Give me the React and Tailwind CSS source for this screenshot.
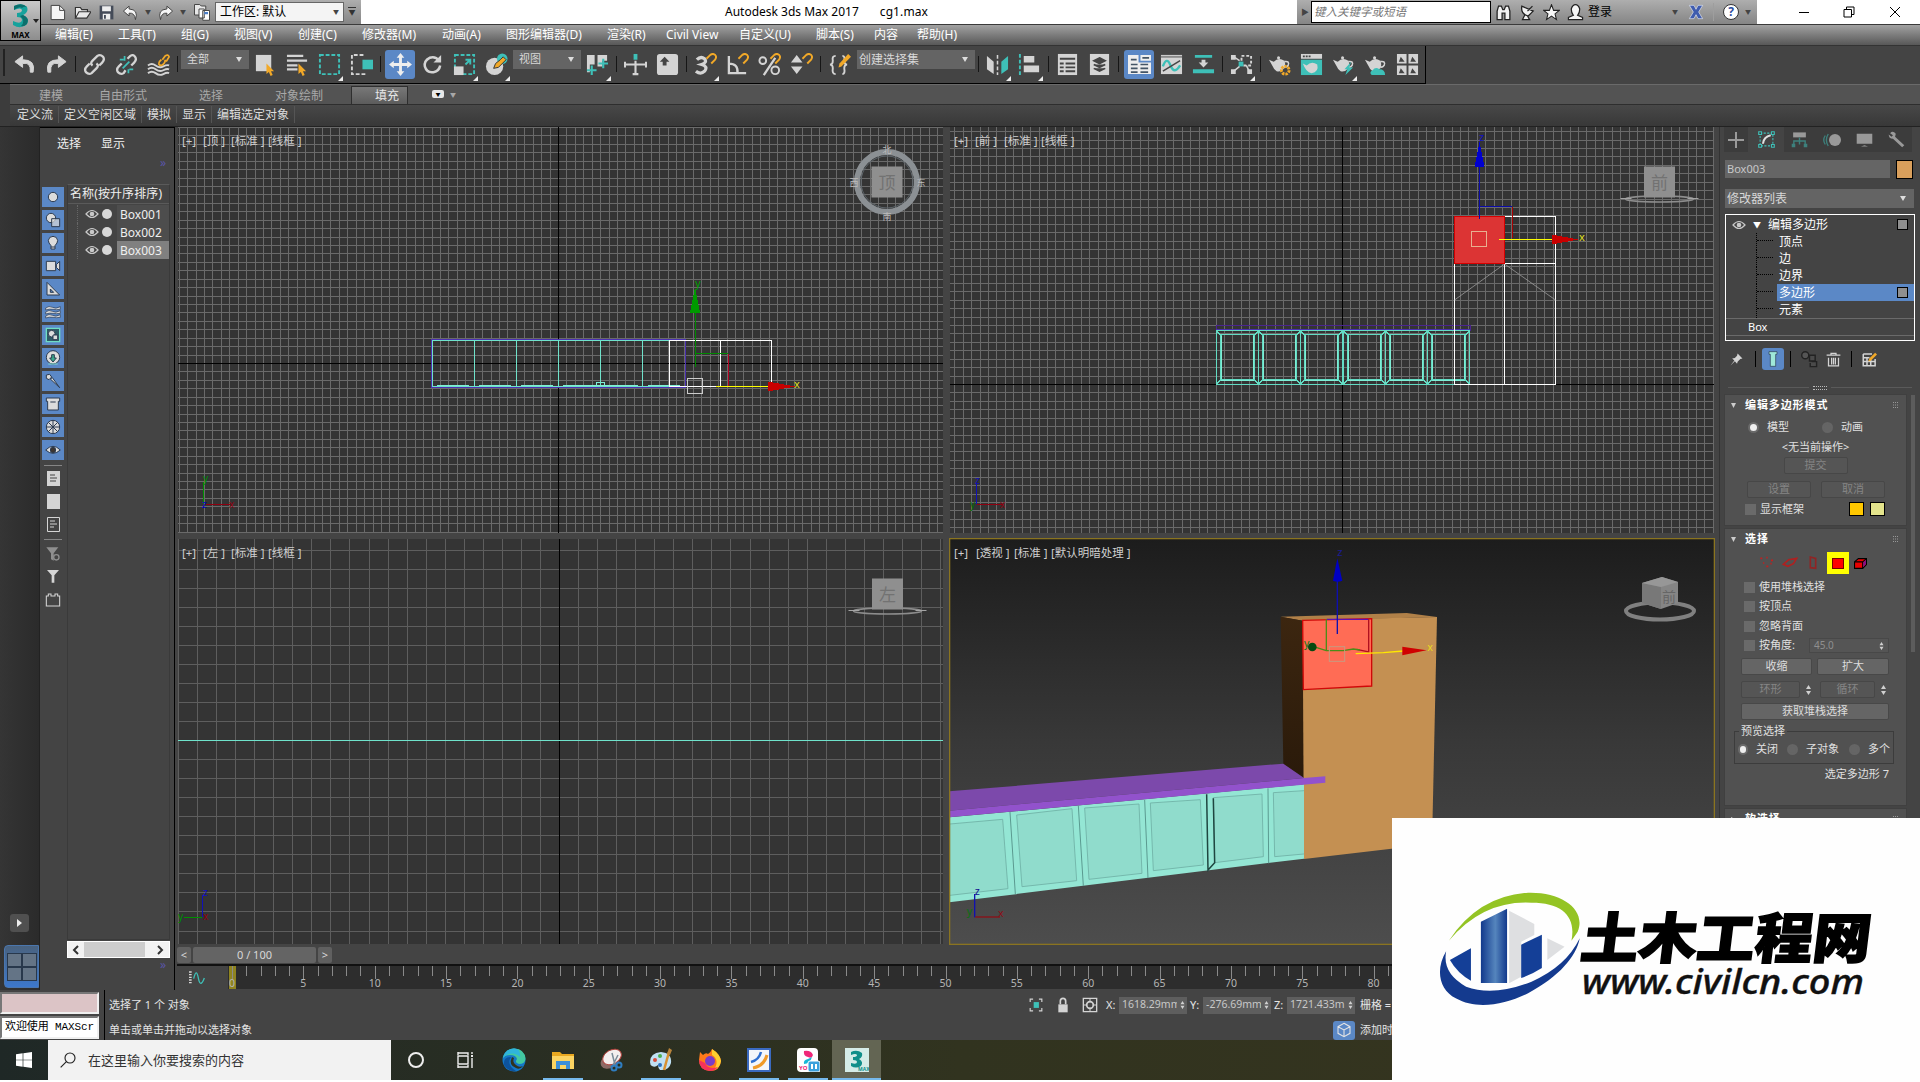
import { Fragment } from "react";

const MENUS = [
  ["编辑(E)", "w-[63px]"],
  ["工具(T)", "w-[63px]"],
  ["组(G)", "w-[53px]"],
  ["视图(V)", "w-16"],
  ["创建(C)", "w-16"],
  ["修改器(M)", "w-20"],
  ["动画(A)", "w-16"],
  ["图形编辑器(D)", "w-[101px]"],
  ["渲染(R)", "w-[59px]"],
  ["Civil View", "w-[73px]"],
  ["自定义(U)", "w-[77px]"],
  ["脚本(S)", "w-[58px]"],
  ["内容", "w-[43px]"],
  ["帮助(H)", "w-16"],
];

const L = "#d4d4d4";
const T = "#3ec0b8";
const O = "#f2a928";

function Svg({ children, className = "w-6 h-6", box = "0 0 24 24" }) {
  return (
    <svg className={`shrink-0 ${className}`} viewBox={box} fill="none">
      {children}
    </svg>
  );
}

function Tool({ children, active, more }) {
  return (
    <div className="relative flex h-[30px] w-8 shrink-0 items-center justify-center">
      <div
        className={
          active
            ? "flex h-[29px] w-[30px] items-center justify-center rounded-[3px] bg-[#5b88c6]"
            : "flex items-center justify-center"
        }
      >
        <Svg className="h-[23px] w-[23px]">{children}</Svg>
      </div>
      {more && (
        <svg className="absolute right-0.5 -bottom-0.5 h-1.5 w-1.5" viewBox="0 0 6 6">
          <path d="M6 1V6H1Z" fill="#eee" />
        </svg>
      )}
    </div>
  );
}

function Sep() {
  return (
    <div className="flex h-[30px] w-1.5 shrink-0 items-center justify-center">
      <div className="h-4 w-px bg-[#161616]" />
    </div>
  );
}

function Dropdown({ label, className }) {
  return (
    <div className={`flex h-[19px] shrink-0 items-center justify-between self-start bg-[#646464] text-[#d8d8d8] ${className}`}>
      <span>{label}</span>
      <svg className="h-[5px] w-1.5" viewBox="0 0 6 5">
        <path d="M0 0H6L3 5Z" fill="#ddd" />
      </svg>
    </div>
  );
}

function Cursor() {
  return <path d="M13 11V22L15.500 19.800L17.300 24L19.500 23L17.700 19H21Z" fill={O} />;
}

function Magnet() {
  return <path d="M13 6L17 2Q20 0 22 2Q24 4 22 7L18 11" stroke={O} strokeWidth="2" />;
}

function Teapot() {
  return (
    <>
      <path d="M1 7L6 9Q11 4 17 8Q19 12 17 16Q14 20 9 19Q6 17 5 14Z" fill={L} />
      <path d="M17 9Q23 8 21 13Q20 15 17 15" stroke={L} strokeWidth="1.6" />
      <circle cx="11" cy="5" r="1.6" fill={L} />
    </>
  );
}

function TitleBar() {
  return (
    <div className="flex h-6 shrink-0 bg-white text-xs text-black">
      <div className="flex w-[361px] items-center bg-linear-to-b from-[#aeaeae] to-[#858585] pl-[49px]">
        <Svg className="mr-2 h-[17px] w-[17px]">
          <path d="M3 2H15L22 9V22H3Z" fill="#f5f5f5" stroke="#444" strokeWidth="1.4" />
          <path d="M15 2V9H22" stroke="#444" strokeWidth="1.4" />
        </Svg>
        <Svg className="mr-2 h-[17px] w-[17px]">
          <path d="M2 20V5H9L11 8H19V11M2 20L7 11H24L18 20Z" fill="#e8e8e8" stroke="#333" strokeWidth="1.6" />
        </Svg>
        <Svg className="mr-2 h-[15px] w-[15px]">
          <path d="M1 1H23V23H1Z" fill="#444b58" />
          <path d="M5 2H19V10H5ZM6 14H18V23H6Z" fill="#eee" />
          <path d="M8 16H11V22H8Z" fill="#444b58" />
        </Svg>
        <Svg className="h-[17px] w-[17px]">
          <path d="M10 3L2 10L10 17V13Q18 12 19 22Q24 8 10 7Z" fill="#f5f5f5" stroke="#444" strokeWidth="1.4" />
        </Svg>
        <span className="mx-1.5 text-[6px] text-[#444]">▼</span>
        <Svg className="h-[17px] w-[17px]">
          <path d="M14 3L22 10L14 17V13Q6 12 5 22Q0 8 14 7Z" fill="#f5f5f5" stroke="#444" strokeWidth="1.4" />
        </Svg>
        <span className="mx-1.5 text-[6px] text-[#444]">▼</span>
        <Svg className="mr-1 ml-px h-[18px] w-[18px]">
          <path d="M2 2H9L11 4H17V16H2Z" fill="#e8e8e8" stroke="#444" strokeWidth="1.3" />
          <path d="M8 8H15V20H8ZM13 10H22V23H13Z" fill="#fff" stroke="#444" strokeWidth="1.3" />
          <path d="M15 12H20V15H15Z" fill="#4c7fc8" />
        </Svg>
        <div className="flex h-5 w-[129px] items-center justify-between border border-[#666] bg-[#f4f4f4] px-1">
          <span>工作区: 默认</span>
          <span className="text-[6px] text-[#444]">▼</span>
        </div>
        <div className="ml-1 flex flex-col items-center">
          <div className="h-px w-2 bg-[#333]" />
          <span className="text-[7px] leading-[9px] text-[#333]">▼</span>
        </div>
      </div>
      <div className="flex w-[936px] items-center pl-[364px] whitespace-pre">
        <span>Autodesk 3ds Max 2017</span>
        <span className="ml-[21px] tracking-[0.1px]">cg1.max</span>
      </div>
      <div className="flex w-[460px] items-center bg-linear-to-b from-[#aeaeae] to-[#858585]">
        <span className="w-3.5 pl-1 text-[8px] text-[#444]">▶</span>
        <div className="h-[22px] w-[180px] shrink-0 border border-black bg-white pl-0.5 text-[11.5px] leading-[19px] text-[#777] italic">
          键入关键字或短语
        </div>
        <Svg className="ml-1 h-[17px] w-[17px]">
          <path d="M3 22V10L5 3H9L11 8H13L15 3H19L21 10V22H14V13H10V22Z" fill="#f2f2f2" stroke="#222" strokeWidth="1.8" />
        </Svg>
        <Svg className="ml-[7px] h-[17px] w-[17px]">
          <path d="M4 3Q2 14 13 17L20 10ZM12 10L19 3M8 16L5 22H15L12 17" fill="#f2f2f2" stroke="#222" strokeWidth="1.8" />
        </Svg>
        <Svg className="ml-[7px] h-[17px] w-[17px]">
          <path d="M12 1L15 9H23L17 14L19 22L12 17L5 22L7 14L1 9H9Z" fill="#f7f7f7" stroke="#222" strokeWidth="1.5" />
        </Svg>
        <Svg className="ml-[7px] h-[17px] w-[17px]">
          <path d="M2 22V19L9 16Q6 12 6 7Q8 1 12 1Q16 1 18 7Q18 12 15 16L22 19V22Z" fill="#f7f7f7" stroke="#222" strokeWidth="1.7" />
        </Svg>
        <span className="ml-1">登录</span>
        <span className="ml-[60px] text-[6px] text-[#444]">▼</span>
        <Svg className="ml-2.5 h-4 w-4">
          <path d="M2 2H9L12 8L15 2H22L16 12L22 22H15L12 16L9 22H2L8 12Z" fill="#3f5cae" stroke="#e4e8f4" strokeWidth="1" />
        </Svg>
        <div className="mx-[9px] h-[18px] w-px bg-[#9e9e9e]" />
        <div className="flex h-4 w-4 items-center justify-center rounded-full border border-[#333] bg-white text-xs font-bold text-[#2b4da0]">?</div>
        <span className="ml-1.5 text-[6px] text-[#444]">▼</span>
      </div>
      <div className="flex flex-1 items-center pl-[42px]">
        <div className="h-px w-2.5 bg-black" />
        <Svg className="ml-[34px] h-3 w-3" box="0 0 12 12">
          <path d="M1 3.500H8.500V11H1ZM3.500 3.500V1H11V8.500H8.500" stroke="#000" />
        </Svg>
        <Svg className="ml-[34px] h-3 w-3" box="0 0 12 12">
          <path d="M1 1L11 11M11 1L1 11" stroke="#000" />
        </Svg>
      </div>
    </div>
  );
}

function AppButton() {
  return (
    <div className="absolute top-0 left-0 flex h-[41px] w-[41px] flex-col items-center justify-between border border-black bg-linear-to-b from-[#c9c9c9] to-[#8d8d8d]">
      <Svg className="mt-px h-[27px] w-9" box="0 0 36 27">
        <path d="M11 4Q19 0 24 5Q26 10 20 13Q27 16 24 22Q18 28 10 23V19Q18 23 19 18Q19 15 14 15V11Q19 11 19 8Q18 5 11 8Z" fill="#16a29c" />
        <path d="M11 4Q19 0 24 5Q21 4 19 6Q16 4 11 8ZM20 13Q27 16 24 22Q21 25 18 24Q23 19 17 14Z" fill="#0b6f6c" />
        <path d="M30 17H36L33 21Z" fill="#222" />
      </Svg>
      <span className="text-[8px] leading-[10px] font-bold text-black">MAX</span>
    </div>
  );
}

function MenuBar() {
  return (
    <div className="flex h-[21px] shrink-0 items-center border-t border-[#3a3a3a] bg-linear-to-b from-[#a2a2a2] to-[#585858] pl-[55px] text-xs text-white">
      {MENUS.map(([label, width]) => (
        <span key={label} className={`shrink-0 whitespace-nowrap ${width}`}>
          {label}
        </span>
      ))}
    </div>
  );
}

function Toolbar() {
  return (
    <div className="h-[39px] shrink-0 border-t border-[#333] bg-[#444]">
      <div className="flex h-[38px] w-[1426px] items-start border-r border-b border-black pt-[3px]">
        <div className="mr-[3px] ml-[3px] h-[27px] w-0.5 border-x border-[#222]" />
        <Tool>
          <path d="M10 3L2 9L10 15V11Q19 9 18 20L21 20Q24 7 10 7Z" fill={L} stroke={L} strokeWidth="1" />
        </Tool>
        <Tool>
          <path d="M14 3L22 9L14 15V11Q5 9 6 20L3 20Q0 7 14 7Z" fill={L} stroke={L} strokeWidth="1" />
        </Tool>
        <Sep />
        <Tool>
          <path d="M10 13Q7 11 10 8L15 3Q18 1 21 4Q23 7 20 10L17 13M14 11Q17 13 14 16L9 21Q6 23 3 20Q1 17 4 14L7 11" stroke={L} strokeWidth="2.4" />
        </Tool>
        <Tool>
          <path d="M13 6L16 3Q19 1 21 4Q23 7 20 10L17 13M11 18L9 21Q6 23 3 20Q1 17 4 14L7 11" stroke={L} strokeWidth="2.4" />
          <path d="M10 3V8M5 7H9M14 21V17M19 17H15M8 16L15 9" stroke={T} strokeWidth="1.8" />
        </Tool>
        <Tool>
          <path d="M1 13Q5 10 9 13T17 14T23 13M1 17Q5 14 9 17T17 18T23 17M1 21Q5 18 9 21T17 22T23 21" stroke={L} strokeWidth="2" />
          <path d="M16 7L19 3Q22 1 23 4L20 9M19 7Q19 11 15 13Q11 13 13 9L15 7" stroke={O} strokeWidth="1.8" />
        </Tool>
        <div className="w-[7px] shrink-0">
          <Sep />
        </div>
        <Dropdown label="全部" className="mt-px w-[68px] pr-[7px] pl-1.5 text-[11px]" />
        <Tool>
          <path d="M2 2H18V19H2Z" fill={L} />
          <Cursor />
        </Tool>
        <Tool>
          <path d="M1 3H18M1 8H22M1 13H12M1 17H12" stroke={L} strokeWidth="2.4" />
          <Cursor />
        </Tool>
        <Tool more>
          <path d="M2 2H22V22H2Z" stroke={T} strokeWidth="2" strokeDasharray="4 2" />
        </Tool>
        <Tool>
          <path d="M16 22H2V2H16" stroke={L} strokeWidth="2" strokeDasharray="4 2" />
          <path d="M13 7H24V17H13Z" fill={T} />
        </Tool>
        <div className="w-[7px] shrink-0">
          <Sep />
        </div>
        <Tool active>
          <path d="M12 0L16 5H13.500V10.500H19V8L24 12L19 16V13.500H13.500V19H16L12 24L8 19H10.500V13.500H5V16L0 12L5 8V10.500H10.500V5H8Z" fill="#eee" />
        </Tool>
        <Tool>
          <path d="M19 8Q15 3 9 5Q3 8 4 14Q6 21 13 20Q19 19 20 13" stroke={L} strokeWidth="2.6" />
          <path d="M21 2V10H13Z" fill={L} />
        </Tool>
        <Tool more>
          <path d="M2 2H22V22H2Z" stroke={T} strokeWidth="2" strokeDasharray="4 2" />
          <path d="M1 14H11V23H1Z" fill={L} />
          <path d="M13 7H18V12M18 7L13 12" stroke={T} strokeWidth="2" />
        </Tool>
        <Tool more>
          <circle cx="10" cy="14" r="9" fill={L} />
          <circle cx="18" cy="6" r="5.500" fill={T} />
          <path d="M19 4L22 7L14 15L9 16L11 11L16 7Z" fill={O} stroke="#333" />
        </Tool>
        <Dropdown label="视图" className="mt-px ml-px w-[68px] pr-[7px] pl-1.5 text-[11px]" />
        <Tool more>
          <path d="M1 2H9V12H4V20H1ZM12 2H22V8H17V14H12Z" fill={L} />
          <path d="M6 13V23M1 18H11M18 6V16M13 11H23" stroke={T} strokeWidth="2.2" />
        </Tool>
        <Sep />
        <Tool>
          <path d="M12 8V23M1 12H23M1 9V15M23 9V15M9 22H15" stroke={L} strokeWidth="2.2" />
          <path d="M10 1H14V7H10Z" fill={T} />
        </Tool>
        <Tool>
          <rect x="1" y="1" width="22" height="22" rx="3" fill={L} />
          <path d="M9 4L14 9H11V13H7V9H4Z" fill="#444" />
        </Tool>
        <Sep />
        <Tool more>
          <path d="M3 7Q7 3 11 6Q14 10 8 12Q15 14 11 19Q7 23 2 19" stroke={L} strokeWidth="3.400" />
          <Magnet />
        </Tool>
        <Tool>
          <path d="M3 3V21H21M3 11Q13 11 12 21" stroke={L} strokeWidth="2.400" />
          <Magnet />
        </Tool>
        <Tool>
          <circle cx="5" cy="8" r="3.500" stroke={L} strokeWidth="2" />
          <circle cx="18" cy="18" r="4" stroke={L} strokeWidth="2" />
          <path d="M18 5L6 23" stroke={L} strokeWidth="2.400" />
          <Magnet />
        </Tool>
        <Tool>
          <path d="M7 2L13 10H1ZM7 22L13 14H1Z" fill={L} />
          <Magnet />
        </Tool>
        <Sep />
        <Tool>
          <path d="M8 3Q4 3 5 8Q5 12 2 12Q5 12 5 16Q4 22 8 22M15 3Q18 3 17 8Q17 12 20 12Q17 12 17 16Q18 22 15 22" stroke={L} strokeWidth="2" />
          <path d="M21 1L24 4L14 14L11 15L12 11Z" fill={O} />
        </Tool>
        <Dropdown label="创建选择集" className="mt-px ml-0.5 w-[118px] pr-[7px] pl-0.5 text-xs" />
        <Sep />
        <Tool more>
          <path d="M1 3L8 9V22L1 17Z" fill={L} />
          <path d="M23 3L16 9V22L23 17Z" fill={T} />
          <path d="M12 2V23" stroke={L} strokeWidth="1.600" strokeDasharray="4 2" />
        </Tool>
        <Tool more>
          <path d="M2 1V23" stroke={T} strokeWidth="2" strokeDasharray="4 2" />
          <path d="M6 3H17V10H6ZM6 13H22V20H6Z" fill={L} />
        </Tool>
        <Sep />
        <Tool>
          <path d="M2 1H22V23H2Z" fill={L} />
          <path d="M4 6H20M4 11H8M10 11H20M4 15H8M10 15H20M4 19H8M10 19H20" stroke="#444" strokeWidth="2" />
        </Tool>
        <Tool>
          <path d="M2 1H22V23H2Z" fill={L} />
          <path d="M12 5L18 8L12 11L6 8ZM6 12L12 15L18 12M6 16L12 19L18 16" fill="#444" stroke="#444" strokeWidth="1.600" />
        </Tool>
        <div className="w-2 shrink-0">
          <Sep />
        </div>
        <Tool active>
          <path d="M0 2H11V10H24V22H0ZM13 2H24V8H13Z" fill="#eee" />
          <path d="M3 7H9M15 5H22M3 12H10M13 12H21M3 16H10M13 16H21M3 20H10M13 20H21" stroke="#456" strokeWidth="1.800" />
        </Tool>
        <Tool>
          <path d="M1 2H23V22H1Z" fill={L} />
          <path d="M1 4H23" stroke="#8a8a8a" strokeWidth="2" />
          <path d="M3 14Q7 3 11 13T21 13" stroke={T} strokeWidth="2.500" />
          <path d="M3 19L21 8" stroke="#444" strokeWidth="1.500" />
        </Tool>
        <Tool>
          <path d="M3 2H21V5H3ZM1 17H23V21H1Z" fill={T} />
          <path d="M12 15L7 10H10V7H14V10H17Z" fill={L} />
        </Tool>
        <Sep />
        <Tool more>
          <path d="M4 4L10 8M17 13L20 19M4 19L10 14" stroke={L} strokeWidth="1.600" />
          <path d="M1 2H6V7H1ZM1 17H6V22H1ZM18 17H23V22H18Z" fill={L} />
          <path d="M12 3H22V13H12Z" stroke={L} strokeWidth="2" strokeDasharray="3 2" />
          <path d="M9 9H14V14H9Z" fill={T} />
        </Tool>
        <Sep />
        <Tool>
          <Teapot />
          <circle cx="18" cy="18" r="4" stroke={O} strokeWidth="3" strokeDasharray="2.500 1" />
        </Tool>
        <Tool>
          <path d="M1 1H23V6H1Z" fill={L} />
          <path d="M1 7H23V23H1Z" fill={T} />
          <path d="M3 3.500H11" stroke="#444" strokeWidth="2" strokeDasharray="2 1" />
          <path d="M3 11L7 13Q12 8 18 12Q20 20 12 21Q6 20 3 11Z" fill={L} />
        </Tool>
        <Tool more>
          <Teapot />
          <path d="M20 9L13 17H16L14 23L22 15H18Z" fill={T} />
        </Tool>
        <Tool>
          <Teapot />
          <path d="M8 23Q5 20 9 18Q12 14 16 17Q22 17 22 23Z" fill={T} />
        </Tool>
        <Tool>
          <path d="M1 1H11V11H1ZM13 1H23V11H13ZM1 13H11V23H1ZM13 13H23V23H13Z" fill={L} />
          <path d="M3 9L5 4L9 9ZM15 9L17 4L21 9ZM3 21L5 16L9 21ZM15 21L17 16L21 21Z" fill="#444" />
        </Tool>
      </div>
    </div>
  );
}

function Ribbon() {
  return (
    <div className="h-[42px] shrink-0 bg-[#3c3c3c] pl-2.5">
      <div className="flex h-[21px] items-end border-t border-b border-t-[#6a6a6a] border-b-[#2e2e2e] bg-[#535353] text-xs leading-[17px] text-[#a8a8a8]">
        <span className="w-[61px] pl-[29px] whitespace-nowrap">建模</span>
        <span className="w-[99px] pl-7">自由形式</span>
        <span className="w-[76px] pl-[29px]">选择</span>
        <span className="w-[95px] pl-[29px]">对象绘制</span>
        <span className="ml-2.5 w-[57px] border border-b-0 border-[#2e2e2e] bg-linear-to-b from-[#787878] to-[#5c5c5c] pl-[23px] leading-[17px] text-[#e8e8e8]">填充</span>
        <div className="mb-1.5 ml-6 flex h-2 w-3 items-center justify-center rounded-[2px] bg-[#e8e8e8] text-[5px] text-black">▼</div>
        <span className="ml-1.5 text-[6px]">▼</span>
      </div>
      <div className="flex h-[21px] items-center bg-linear-to-b from-[#484848] to-[#383838] pb-0.5 pl-0.5 text-xs text-[#dcdcdc]">
        {["定义流", "定义空闲区域", "模拟", "显示", "编辑选定对象"].map((label) => (
          <span key={label} className="border-r border-[#555] px-[5px] leading-[17px]">
            {label}
          </span>
        ))}
      </div>
    </div>
  );
}

const FILTERS = [
  <circle cx="12" cy="12" r="7" />,
  <Fragment><circle cx="9" cy="9" r="7" /><path d="M10 10H22V22H10Z" fillOpacity=".7" /></Fragment>,
  <path d="M9 16Q5 12 5 8Q6 2 12 2Q18 2 19 8Q19 12 15 16V21H9ZM9 18H15" />,
  <path d="M2 5H16V19H2ZM17 10L22 5V19L17 14Z" />,
  <path d="M3 2L22 21H3ZM8 12V17H13Z" />,
  <path d="M1 6Q6 2 11 5T23 4V8Q17 9 12 8T1 9ZM1 12Q6 8 11 11T23 10V14Q17 15 12 14T1 15ZM1 18Q6 14 11 17T23 16V20Q17 21 12 20T1 21Z" strokeWidth="1" />,
  <Fragment><path d="M2 2H22V22H2Z" fill="#2f5a66" stroke="#6fdcc4" strokeWidth="2" /><circle cx="10" cy="10" r="5" /><path d="M12 12H19V19H12Z" /></Fragment>,
  <Fragment><circle cx="12" cy="11" r="10" /><path d="M10 7H14V12H17L12 18L7 12H10Z" fill="#3aa88a" /><path d="M5 21H19" stroke="#7fe0cf" /></Fragment>,
  <path d="M2 3L7 2L10 6L6 10L2 8ZM8 9L11 7L22 22Z" />,
  <path d="M2 3H22V8H20V21H4V8H2ZM8 9H16" />,
  <Fragment><circle cx="12" cy="12" r="10" /><path d="M12 2V22M2 12H22M5 5L19 19M19 5L5 19" strokeWidth="1.500" /></Fragment>,
  <Fragment><path d="M1 12Q12 1 23 12Q12 22 1 12Z" /><circle cx="12" cy="12" r="4" fill="#3c3530" /></Fragment>,
];

function Eye({ className }) {
  return (
    <Svg className={className} box="0 0 14 10">
      <path d="M1 5Q7 -2 13 5Q7 12 1 5Z" stroke="#c9c9c9" strokeWidth="1.200" />
      <circle cx="7" cy="5" r="2.300" fill="#c9c9c9" />
    </Svg>
  );
}

function Explorer() {
  return (
    <div className="flex w-[135px] shrink-0 flex-col border-t border-r border-black bg-[#444] text-xs text-[#efefef]">
      <div className="flex h-7 items-center gap-5 pt-1 pl-[17px]">
        <span>选择</span>
        <span>显示</span>
      </div>
      <div className="h-7 pt-px pr-2 text-right leading-3 text-[#5a55a8]">»</div>
      <div className="flex flex-1">
        <div className="flex w-6 flex-col items-center gap-[3px] pt-[3px] pl-0.5">
          {FILTERS.map((shape, i) => (
            <div key={i} className="flex h-5 w-[22px] items-center justify-center bg-[#5b88c6]">
              <svg className="h-4 w-4" viewBox="0 0 24 24" fill="#dcdcdc" stroke="#2c3b50" strokeWidth="1.500">
                {shape}
              </svg>
            </div>
          ))}
          <div className="mt-0.5 h-px w-[18px] bg-[#858585]" />
          <Svg className="mt-0.5 mb-[7px] h-[15px] w-[13px]" box="0 0 13 15">
            <path d="M0 0H13V15H0Z" fill={L} />
            <path d="M3 4H8M3 7H10M3 10H9" stroke="#444" />
          </Svg>
          <div className="-mt-0.5 h-[15px] w-[13px] bg-[#d4d4d4]" />
          <Svg className="mt-[5px] h-[15px] w-[13px]" box="0 0 13 15">
            <path d="M.5.5H12.500V14.500H.5Z" stroke={L} />
            <path d="M3 4H8M3 7H10M3 10H7" stroke={L} />
          </Svg>
          <div className="mt-1 h-px w-[18px] bg-[#858585]" />
          <Svg className="mt-[3px] h-4 w-4">
            <path d="M2 2H20L13 11V22L9 20V11Z" fill="#8f8f8f" />
            <circle cx="17" cy="17" r="4" stroke="#8f8f8f" strokeWidth="2" />
          </Svg>
          <Svg className="mt-[3px] h-4 w-4">
            <path d="M3 3H21L14 11V22H10V11Z" fill={L} />
          </Svg>
          <Svg className="mt-[5px] h-4 w-4">
            <path d="M2 6H5V3H9V6H15V3H19V6H22V21H2Z" stroke={L} strokeWidth="1.600" />
          </Svg>
        </div>
        <div className="ml-[3px] flex w-[103px] flex-col border border-[#3a3a3a] border-t-[#5a5a5a]">
          <div className="mb-px h-[19px] border-b border-[#5a5a5a] pl-0.5 leading-[18px] tracking-[0.1px] whitespace-nowrap">名称(按升序排序)</div>
          {["Box001", "Box002", "Box003"].map((name, i) => (
            <div key={name} className="flex h-[18px] items-center">
              <div className="ml-[9px] h-full w-2 border-l border-dotted border-[#666]" />
              <Eye className="h-2.5 w-3.5" />
              <div className="mr-[9px] ml-[3px] h-2.5 w-2.5 shrink-0 rounded-full bg-[#d8d8d8]" />
              <span className={`-ml-1 h-full flex-1 pl-[3px] leading-[19px] ${i === 2 ? "bg-[#808080]" : "bg-[#4d4d4d]"}`}>{name}</span>
            </div>
          ))}
        </div>
      </div>
      <div className="mt-px mr-1 ml-[27px] flex h-[17px] items-center border border-white bg-[#f2f2f2]">
        <Svg className="mx-1 h-2.5 w-2" box="0 0 8 10">
          <path d="M6 1L2 5L6 9" stroke="#333" strokeWidth="2" />
        </Svg>
        <div className="h-full w-[61px] bg-[#cdcdcd]" />
        <Svg className="ml-[11px] h-2.5 w-2" box="0 0 8 10">
          <path d="M2 1L6 5L2 9" stroke="#333" strokeWidth="2" />
        </Svg>
      </div>
      <div className="h-8 pt-px pr-2 text-right leading-3 text-[#5a55a8]">»</div>
    </div>
  );
}

// grid lines either side of an axis position, on whole pixels
function steps(axis, gap, from, to) {
  const out = [];
  for (let n = Math.ceil((from - axis) / gap); axis + n * gap <= to; n++) {
    if (n !== 0) out.push(Math.floor(axis + n * gap) + 0.5);
  }
  return out;
}

function Grid({ x, y, w, h, ax, ay, gap, color = "#6a6a6a" }) {
  const d =
    steps(ax, gap, x, x + w).map((v) => `M${v} ${y}V${y + h}`).join("") +
    steps(ay, gap, y, y + h).map((v) => `M${x} ${v}H${x + w}`).join("");
  return (
    <>
      <path d={d} stroke={color} />
      <path d={`M${ax} ${y}V${y + h}M${x} ${ay}H${x + w}`} stroke="#000" />
    </>
  );
}

function Label({ x, y, parts }) {
  return parts.map(([dx, text]) => (
    <text key={dx} x={x + dx} y={y} fontSize="11.500" fill="#cfcfcf" xmlSpace="preserve">
      {text}
    </text>
  ));
}

function Cube({ x, y, char, ring = true }) {
  return (
    <g>
      {ring && <ellipse cx={x} cy={y + 17} rx="34" ry="3" stroke="#8d8d8d" strokeWidth="1.5" />}
      {ring && <path d={`M${x - 39} ${y + 16.5}H${x - 28}M${x + 28} ${y + 16.5}H${x + 39}`} stroke="#a5a5a5" />}
      <rect x={x - 15.5} y={y - 15.5} width="31" height="31" fill="#8f8f8f" />
      <text x={x} y={y + 7} fontSize="17" textAnchor="middle" fill="#727272">{char}</text>
    </g>
  );
}

const VIEW = "block bg-[#343434]";

function TopView() {
  return (
    <svg className={VIEW} width="765" height="406" viewBox="178 127 765 406" fill="none" shapeRendering="crispEdges">
      <Grid x={178} y={127} w={765} h={406} ax={558.5} ay={363.5} gap={8.43} />
      <Label x={182} y={145} parts={[[0, "[+]"], [21, "[顶 ]"], [49, "[标准 ]"], [86, "[线框 ]"]]} />
      <rect x="431.5" y="339.5" width="254" height="48" stroke="#4a2fb0" />
      <path d="M432.500 340.500H669M432.500 386.500H669M432.500 340V387M474.500 340V386M516.500 340V386M558.500 340V386M600.500 340V386M642.500 340V386" stroke="#6fe3cb" />
      <path d="M437 385.500H469M479 385.500H511M521 385.500H553M563 385.500H638M648 385.500H680M596.500 386V382.500H604.500V386" stroke="#7feed6" />
      <path d="M669.500 340.500H771.500V386.500H669.500ZM720.500 340V387" stroke="#fff" />
      <path d="M695.500 367V312M695.500 353.500H728" stroke="#008a00" />
      <path d="M695 287L700 313H690Z" fill="#009a00" />
      <path d="M728.500 354V386" stroke="#b00020" />
      <path d="M716 386.500H768" stroke="#ff0" />
      <path d="M795 386.500L768 381.500V391.500Z" fill="#c80000" />
      <rect x="687.5" y="378.5" width="15" height="15" stroke="#ccc" />
      <text x="695" y="287" fontSize="11" fill="#00a000">y</text>
      <text x="794" y="388" fontSize="11" fill="#dede20">x</text>
      <g shapeRendering="auto">
        <circle cx="887" cy="182" r="30" stroke="#8b9094" strokeWidth="6" />
        <circle cx="887" cy="182" r="26" stroke="#5e666c" />
        <Cube x={887} y={182} char="顶" ring={false} />
        <text x="887" y="153" fontSize="9" textAnchor="middle" fill="#bbb">北</text>
        <text x="887" y="220" fontSize="9" textAnchor="middle" fill="#bbb">南</text>
        <text x="854" y="186" fontSize="9" textAnchor="middle" fill="#bbb">西</text>
        <text x="921" y="186" fontSize="9" textAnchor="middle" fill="#bbb">东</text>
      </g>
      <path d="M203.500 504V482" stroke="#009000" />
      <path d="M206 504.500H230" stroke="#900010" />
      <text x="203" y="482" fontSize="10" fill="#009000">y</text>
      <text x="202" y="508" fontSize="10" fill="#0000c0">z</text>
      <text x="229" y="508" fontSize="10" fill="#900010">x</text>
    </svg>
  );
}

function FrontView() {
  const doors = [0, 1, 2, 3, 4, 5];
  return (
    <svg className={VIEW} width="764" height="406" viewBox="950 127 764 406" fill="none" shapeRendering="crispEdges">
      <Grid x={950} y={127} w={764} h={406} ax={1342.5} ay={384.5} gap={8.43} />
      <Label x={954} y={145} parts={[[0, "[+]"], [21, "[前 ]"], [50, "[标准 ]"], [87, "[线框 ]"]]} />
      <path d="M1216 331.500V325.500H1470V331" stroke="#4a2490" />
      <path d="M1216 329.500H1470" stroke="#4a2fb0" />
      {doors.map((i) => {
        const x = Math.round(1216 + i * 42.2) + 0.5;
        return (
          <g key={i} stroke="#63dcc4">
            <rect x={x} y="330.5" width="42" height="54" />
            <rect x={x + 4} y="334.5" width="34" height="45" />
            <path d={`M${x + 5} 335V380.5H${x + 37}V335`} stroke="#7feed6" />
            <path d={`M${x} 331L${x + 5} 336M${x + 42} 331L${x + 37} 336M${x} 384L${x + 5} 379M${x + 42} 384L${x + 37} 379`} />
          </g>
        );
      })}
      <path d="M1454.500 264V384.500H1555.500V216.500H1505M1504.500 264V384M1505 263.500H1556" stroke="#fff" />
      <path d="M1454.500 300L1504.500 264L1555.500 300" stroke="#9a9a9a" shapeRendering="auto" strokeWidth=".8" />
      <rect x="1454.5" y="216.5" width="50" height="47" fill="#dc3434" stroke="#d80000" />
      <rect x="1471.5" y="231.5" width="15" height="15" stroke="#e8b090" />
      <path d="M1479.500 219V165M1480 206.500H1512" stroke="#0a0aa8" />
      <path d="M1479.500 142L1484.500 167H1474.500Z" fill="#0000d0" />
      <path d="M1512.500 207V238" stroke="#a80000" />
      <path d="M1499 239.500H1552" stroke="#ff0" />
      <path d="M1578 239.500L1552 234.500V244.500Z" fill="#c80000" />
      <text x="1479" y="141" fontSize="11" fill="#1010c8">z</text>
      <text x="1579" y="241" fontSize="11" fill="#dede20">x</text>
      <g shapeRendering="auto">
        <Cube x={1659.5} y={182} char="前" />
      </g>
      <path d="M976.500 504V484" stroke="#1010b8" />
      <path d="M977 504.500H1002" stroke="#900010" />
      <text x="975" y="484" fontSize="10" fill="#1010b8">z</text>
      <text x="970" y="508" fontSize="10" fill="#007000">y</text>
      <text x="1000" y="508" fontSize="10" fill="#900010">x</text>
    </svg>
  );
}

function LeftView() {
  return (
    <svg className={VIEW} width="765" height="405" viewBox="178 539 765 405" fill="none" shapeRendering="crispEdges">
      <Grid x={178} y={539} w={765} h={405} ax={559.5} ay={740.5} gap={19.05} color="#5e5e5e" />
      <path d="M178 740.500H943" stroke="#6fe3cb" />
      <Label x={182} y={557} parts={[[0, "[+]"], [21, "[左 ]"], [49, "[标准 ]"], [86, "[线框 ]"]]} />
      <g shapeRendering="auto">
        <Cube x={887.5} y={594} char="左" />
      </g>
      <path d="M202.500 917V895" stroke="#1010b8" />
      <path d="M184 917.500H202" stroke="#009000" />
      <text x="203" y="896" fontSize="10" fill="#1010c8">z</text>
      <text x="178" y="920" fontSize="10" fill="#009000">y</text>
      <text x="203" y="920" fontSize="10" fill="#900010">x</text>
    </svg>
  );
}

function PerspectiveView() {
  const doors = [
    "M30 852L188 838L204 1046L30 1066",
    "M230 825L396 806L410 1022L246 1040Z",
    "M434 804L597 792L606 1000L447 1018Z",
    "M631 789L781 779L790 975L640 992Z",
    "M820 773L966 762L970 950L824 968Z",
    "M1092 752L1000 758L1004 950L1092 942",
  ];
  return (
    <svg className="block" width="766" height="407" viewBox="949 538 766 407" fill="none">
      <defs>
        <linearGradient id="sky" x1="0" y1="0" x2="0" y2="1">
          <stop offset="0" stopColor="#1c1c1c" />
          <stop offset=".5" stopColor="#383838" />
          <stop offset="1" stopColor="#4d4d4d" />
        </linearGradient>
        <linearGradient id="side" x1="0" y1="0" x2="0" y2="1">
          <stop offset="0" stopColor="#3c2610" />
          <stop offset="1" stopColor="#2a1a0a" />
        </linearGradient>
      </defs>
      <rect x="949" y="538" width="766" height="407" fill="url(#sky)" />
      <g transform="translate(940 540) scale(.33333)">
        <path d="M1022 230L1400 219L1491 231L1088 242Z" fill="#b08048" />
        <path d="M1022 230L1088 242L1092 714L1030 672Z" fill="url(#side)" />
        <path d="M1088 240L1491 231L1476 912L1092 957Z" fill="#c49052" />
        <path d="M28 832L1092 733V956L28 1087Z" fill="#94e6d4" />
        <path d="M28 754L1030 671L1092 714L28 812Z" fill="#7c49ab" />
        <path d="M28 812L1092 714L1156 709V728L28 832Z" fill="#9252cc" />
        {doors.map((d) => (
          <path key={d} d={d} fill="#90dccc" stroke="#6fb0a5" strokeWidth="2.5" />
        ))}
        <path d="M210 816L226 1062M415 797L430 1038M614 780L624 1014M984 745L986 970" stroke="#5a9a90" strokeWidth="3" />
        <path d="M800 763L804 990L824 968L820 775" stroke="#1f4640" strokeWidth="4.500" />
        <path d="M1088 241L1295 236V438L1090 449Z" fill="#ff6c55" stroke="#d00808" strokeWidth="4" />
        <path d="M1160 238H1286" stroke="#6010b0" strokeWidth="4" />
        <path d="M1286 238V336L1250 328" stroke="#b01020" strokeWidth="4" />
        <path d="M1159 238V332H1210L1240 327L1260 330M1159 332L1128 322" stroke="#4c8c18" strokeWidth="4" />
        <circle cx="1117" cy="321" r="13" fill="#064a10" />
        <path d="M1192 282V120" stroke="#1010b0" strokeWidth="4" />
        <path d="M1192 55L1207 122Q1192 128 1179 122Z" fill="#0000c4" />
        <path d="M1247 341L1330 338L1390 333" stroke="#ffe800" strokeWidth="4" />
        <path d="M1460 331L1387 346V320Z" fill="#d00000" />
        <rect x="1168" y="320" width="46" height="44" stroke="#c89a80" strokeWidth="3" />
        <text x="1192" y="48" fontSize="34" fill="#1c1c90">z</text>
        <text x="1092" y="320" fontSize="32" fill="#0a7a10">y</text>
        <text x="1462" y="334" fontSize="32" fill="#e8d820">x</text>
        <path d="M104 1062V1132" stroke="#1010b0" strokeWidth="4" />
        <path d="M106 1131H180" stroke="#8c1018" strokeWidth="4" />
        <text x="104" y="1065" fontSize="32" fill="#101090">z</text>
        <text x="80" y="1126" fontSize="32" fill="#087010">y</text>
        <text x="174" y="1132" fontSize="32" fill="#8c1018">x</text>
      </g>
      <Label x={954} y={557} parts={[[0, "[+]"], [22, "[透视 ]"], [60, "[标准 ]"], [97, "[默认明暗处理 ]"]]} />
      <ellipse cx="1660" cy="611" rx="34" ry="8.500" stroke="#808080" strokeWidth="4" />
      <path d="M1642 583L1662 577L1678 582V603L1661 609L1642 603Z" fill="#858585" />
      <path d="M1642 583L1661 587V609L1642 603Z" fill="#787878" />
      <path d="M1642 583L1662 577L1678 582L1661 587Z" fill="#979797" />
      <text x="1669" y="602" fontSize="14" textAnchor="middle" fill="#666">前</text>
      <rect x="949.5" y="538.5" width="765" height="406" stroke="#8a7420" strokeWidth="1.6" />
    </svg>
  );
}

function TrackBar() {
  const frames = Array.from({ length: 101 }, (_, i) => i);
  return (
    <div className="flex h-[25px] border-t-2 border-[#111]">
      <div className="flex w-[51px] items-center justify-center bg-[#444] pr-3">
        <Svg className="h-4 w-4">
          <path d="M2 2V22" stroke={L} strokeWidth="4" strokeDasharray="2 2" />
          <path d="M7 13Q11 -4 14 12T23 12" stroke={T} strokeWidth="2" />
        </Svg>
      </div>
      <svg className="bg-[#2d2d2d]" width="1490" height="23" viewBox="228 966 1490 23" shapeRendering="crispEdges">
        <rect x="229" y="966" width="7" height="23" fill="#8f8420" />
        {frames.map((n) => (
          <path key={n} d={`M${232.5 + n * 14.27} 966V${n % 5 ? 976 : 979}`} stroke="#8a8a8a" />
        ))}
        {frames.filter((n) => n % 5 === 0).map((n) => (
          <text key={n} x={232 + n * 14.27} y="987" fontSize="10.500" textAnchor="middle" fill="#b5b5b5">{n}</text>
        ))}
      </svg>
    </div>
  );
}

function Workspace() {
  return (
    <div className="flex w-[1544px] shrink-0 flex-col bg-[#444] pl-0.5">
      <div className="grid grid-cols-[772px_766px] grid-rows-[411px_407px]">
        <div className="pl-px"><TopView /></div>
        <div className="pl-px"><FrontView /></div>
        <div className="pt-px pl-px"><LeftView /></div>
        <div><PerspectiveView /></div>
      </div>
      <div className="flex h-[19px] items-center gap-0.5 text-[11px] text-[#d8d8d8]">
        <span className="h-4 w-3.5 rounded-[2px] bg-[#606060] text-center leading-[15px]">&lt;</span>
        <span className="h-4 w-[123px] rounded-[2px] bg-[#646464] text-center leading-4">0 / 100</span>
        <span className="h-4 w-3.5 rounded-[2px] bg-[#606060] text-center leading-[15px]">&gt;</span>
      </div>
      <TrackBar />
    </div>
  );
}

function Button({ label, className, dim }) {
  return (
    <div className={`flex h-[17px] items-center justify-center rounded-[2px] border text-[11px] ${dim ? "border-[#474747] bg-[#555] text-[#858585]" : "border-[#484848] bg-[#656565] text-[#dcdcdc]"} ${className}`}>
      {label}
    </div>
  );
}

function Spinner({ className = "h-2.5" }) {
  return (
    <Svg className={`w-[5px] ${className}`} box="0 0 5 10">
      <path d="M0 4L2.500 0L5 4ZM0 6L2.500 10L5 6Z" fill="#d0d0d0" />
    </Svg>
  );
}

function Check({ label, className }) {
  return (
    <div className={`flex items-center gap-1 text-[11px] ${className}`}>
      <div className="h-[11px] w-[11px] bg-[#6a6a6a]" />
      <span>{label}</span>
    </div>
  );
}

function Radio({ label, on, className = "" }) {
  return (
    <div className={`flex shrink-0 items-center text-[11px] whitespace-nowrap ${className}`}>
      <div className={`h-[11px] w-[11px] rounded-full border-2 ${on ? "border-[#6a6a6a] bg-[#eee]" : "border-[#656565] bg-[#656565]"}`} />
      <span className="ml-2">{label}</span>
    </div>
  );
}

function RolloutTitle({ label, closed }) {
  return (
    <div className="flex h-5 items-center text-[11px] font-bold text-white">
      <Svg className="ml-1.5 h-[5px] w-[5px]" box="0 0 6 6">
        <path d={closed ? "M0 0L6 3L0 6Z" : "M0 0H6L3 6Z"} fill="#ccc" />
      </Svg>
      <span className="ml-[9px] flex-1 tracking-[0.9px]">{label}</span>
      <Svg className="mr-[7px] h-1.5 w-1.5" box="0 0 6 6">
        <path d="M0 .5H6M0 3H6M0 5.500H6" stroke="#999" strokeDasharray="1 1" />
      </Svg>
    </div>
  );
}

const ROLLOUT = "w-[183px] border border-[#404040] bg-[#515151]";

function CommandPanel() {
  return (
    <div className="flex flex-1 flex-col border-l border-[#333] bg-[#444] pl-1 text-xs text-[#e0e0e0]">
      <div className="flex h-[25px] shrink-0 items-center pr-2">
        <div className="flex h-full w-6 items-center justify-center bg-[#3c3c3c]">
          <Svg className="h-4 w-4" box="0 0 16 16"><path d="M8 0V16M0 8H16" stroke="#9a9a9a" strokeWidth="2" /></Svg>
        </div>
        <div className="flex h-full w-9 items-center justify-center bg-[#444]">
          <Svg className="h-[17px] w-[17px]">
            <path d="M3 3H21V21H3Z" stroke={T} strokeWidth="1.500" strokeDasharray="3 2" />
            <path d="M7 18Q8 8 18 6" stroke="#e0e0e0" strokeWidth="3" />
            <path d="M1 1H5V5H1ZM19 1H23V5H19ZM1 19H5V23H1ZM19 19H23V23H19Z" fill="#444" stroke={T} strokeWidth="1.500" />
          </Svg>
        </div>
        <div className="flex h-full flex-1 items-center justify-around bg-[#3c3c3c]">
          <Svg className="h-[17px] w-[17px]">
            <path d="M3 2H21V9H3Z" fill="#999" />
            <path d="M12 9V19M4 19V14H20V19" stroke="#3d807c" strokeWidth="2" />
            <path d="M1 18H6V23H1ZM18 18H23V23H18Z" fill="#3d807c" />
          </Svg>
          <Svg className="h-[18px] w-[18px]">
            <circle cx="16" cy="12" r="8" fill="#999" />
            <path d="M7 4Q2 12 7 20M3 6Q-1 12 3 18" stroke="#3d807c" strokeWidth="1.800" />
          </Svg>
          <Svg className="h-[17px] w-[17px]"><path d="M1 4H23V18H1ZM7 22L12 20L17 22Z" fill="#999" /></Svg>
          <Svg className="h-[17px] w-[17px]"><path d="M3 3Q7 -1 11 4L10 8L23 20L20 23L7 11Q1 11 1 5L5 8L7 6Z" fill="#999" /></Svg>
        </div>
      </div>
      <div className="mt-2 flex gap-1.5 pl-px">
        <div className="h-[18px] w-[165px] bg-[#656565] pl-0.5 text-[11px] leading-[18px] text-[#c8c8c8]">Box003</div>
        <div className="h-[19px] w-[17px] border border-black bg-[#d99f5c]" />
      </div>
      <Dropdown label="修改器列表" className="mt-2.5 ml-px w-[189px] pr-2 pl-0.5" />
      <div className="mt-1.5 ml-px h-[127px] w-[190px] shrink-0 border border-white pt-px text-xs leading-[17px] text-white">
        <div className="flex h-[17px] items-center pr-1.5">
          <Eye className="ml-1.5 h-2.5 w-3.5" />
          <span className="ml-[7px] w-[15px] text-[8px]">▼</span>
          <span className="flex-1">编辑多边形</span>
          <div className="h-[11px] w-[11px] border border-black bg-[#8f8f8f]" />
        </div>
        {["顶点", "边", "边界", "多边形", "元素"].map((name) => (
          <div key={name} className="flex h-[17px] pl-[30px]">
            <div className="flex w-[21px] flex-col border-l border-dotted border-black">
              <div className="h-2 w-4 border-b border-dotted border-black" />
            </div>
            <div className={`flex flex-1 items-center justify-between pr-1.5 pl-0.5 ${name === "多边形" ? "bg-[#5b88c6]" : ""}`}>
              <span>{name}</span>
              {name === "多边形" && <div className="h-[11px] w-[11px] border border-black bg-[#8f8f8f]" />}
            </div>
          </div>
        ))}
        <div className="h-[18px] border-y border-[#6a6a6a] pl-[22px] text-[11px] leading-4">Box</div>
      </div>
      <div className="mt-[7px] flex h-[22px] shrink-0 items-center">
        <Svg className="ml-1.5 h-[13px] w-[13px]"><path d="M14 1L23 10L19 11L14 16L13 20L9 15L1 23L8 14L4 10L9 9L13 5Z" fill={L} /></Svg>
        <div className="ml-3 h-4 w-px bg-black" />
        <div className="ml-1.5 flex h-[22px] w-[22px] items-center justify-center rounded-[3px] bg-[#5b88c6]">
          <Svg className="h-4 w-4"><path d="M6 1H18V5H16V23H8V5H6Z" fill="#9fe8d8" stroke="#2c3b50" /></Svg>
        </div>
        <div className="ml-1.5 h-4 w-px bg-black" />
        <Svg className="ml-2.5 h-[17px] w-[17px]">
          <circle cx="6" cy="6" r="5" fill="#555" stroke="#222" strokeWidth="2" />
          <path d="M12 6H20V14H12ZM15 15H22V22H13V17" fill="#4a4a4a" stroke="#222" strokeWidth="2" />
        </Svg>
        <Svg className="ml-2 h-[15px] w-[15px]"><path d="M1 5H23M8 5V2H16V5M4 9V22H20V9M9 9V20M12 9V20M15 9V20" stroke={L} strokeWidth="2" /></Svg>
        <div className="ml-2.5 h-4 w-px bg-black" />
        <Svg className="ml-2.5 h-[15px] w-[15px]">
          <path d="M2 3H16M2 3V22H21V11M2 9H12M2 15H21M8 9V22M14 12V22" stroke={L} strokeWidth="2.400" />
          <path d="M21 1L24 4L14 14L10 15L12 10Z" fill={O} />
        </Svg>
      </div>
      <div className="mt-[15px] mb-1 flex h-[5px] shrink-0 items-center pr-2 pl-1">
        <div className="h-px flex-1 bg-[#5a5a5a]" />
        <div className="mx-1 h-1 w-3.5 border-y border-dotted border-[#bbb]" />
        <div className="h-px flex-1 bg-[#5a5a5a]" />
      </div>
      <div className="flex gap-1">
        <div className="flex flex-col gap-0.5">
          <div className={`${ROLLOUT} h-[132px]`}>
            <RolloutTitle label="编辑多边形模式" />
            <div className="flex h-[25px] items-center pl-[23px]">
              <Radio label="模型" on className="w-[74px]" />
              <Radio label="动画" />
            </div>
            <div className="h-[17px] text-center text-[11px] leading-[13px]">&lt;无当前操作&gt;</div>
            <Button label="提交" dim className="mx-auto w-16" />
            <div className="mt-[7px] flex gap-2.5 pl-[22px]">
              <Button label="设置" dim className="w-16" />
              <Button label="取消" dim className="w-16" />
            </div>
            <div className="mt-1 flex items-center pl-5">
              <Check label="显示框架" className="w-[104px]" />
              <div className="h-3.5 w-[15px] border border-black bg-[#ffc800]" />
              <div className="ml-1.5 h-3.5 w-[15px] border border-black bg-[#e4e48c]" />
            </div>
          </div>
          <div className={`${ROLLOUT} h-[278px]`}>
            <RolloutTitle label="选择" />
            <div className="flex h-7 items-center pl-[34px]">
              <Svg className="h-4 w-4"><path d="M2 5H5M11 4H13M18 8H21M6 12H8M11 17H14M17 13H19" stroke="#c02020" strokeWidth="2.500" /></Svg>
              <Svg className="ml-[7px] h-4 w-4"><path d="M2 14L10 7L22 5L17 13L9 17Z" stroke="#b02020" strokeWidth="2.500" /></Svg>
              <Svg className="ml-[7px] h-4 w-4"><path d="M8 3L16 5V20L8 19Z" stroke="#902424" strokeWidth="2.500" /></Svg>
              <div className="ml-1.5 flex h-[22px] w-[22px] items-center justify-center bg-[#ffff00]">
                <div className="h-[11px] w-3 border border-[#700] bg-[#f00]" />
              </div>
              <Svg className="ml-[5px] h-[15px] w-[13px]">
                <path d="M1 9L8 3H23V14L16 21H1Z" fill="#e80000" stroke="#000" strokeWidth="2" />
                <path d="M1 9H16V21M16 9L23 3" stroke="#000" strokeWidth="2" />
                <path d="M17 10L22 5V13L17 19Z" fill="#80108c" />
              </Svg>
            </div>
            <div className="flex flex-col pl-[19px]">
              <Check label="使用堆栈选择" className="h-5" />
              <Check label="按顶点" className="h-[19px]" />
              <Check label="忽略背面" className="h-5" />
              <div className="flex h-[19px] items-center">
                <Check label="按角度:" className="w-[65px]" />
                <div className="flex h-[15px] w-20 items-center justify-between border border-[#484848] bg-[#555] px-1 text-[10px] text-[#8f8f8f]">
                  <span>45.0</span>
                  <Spinner className="h-2" />
                </div>
              </div>
            </div>
            <div className="mt-[3px] flex gap-[5px] pl-4">
              <Button label="收缩" className="w-[71px]" />
              <Button label="扩大" className="w-[72px]" />
            </div>
            <div className="mt-1.5 flex items-center pl-4">
              <Button label="环形" dim className="w-[59px]" />
              <Spinner className="mr-[9px] ml-1.5 h-2.5" />
              <Button label="循环" dim className="w-[55px]" />
              <Spinner className="ml-1.5 h-2.5" />
            </div>
            <Button label="获取堆栈选择" className="mt-[5px] ml-4 w-[148px]" />
            <fieldset className="mt-0.5 ml-[9px] h-[42px] w-[160px] border border-[#3c3c3c]">
              <legend className="ml-1 px-0.5 text-[11px] leading-[18px]">预览选择</legend>
              <div className="flex gap-[9px] pt-0.5 pl-[3px]">
                <Radio label="关闭" on className="w-10" />
                <Radio label="子对象" className="w-[53px]" />
                <Radio label="多个" />
              </div>
            </fieldset>
            <div className="mt-[3px] pr-[17px] text-right text-[11px]">选定多边形 7</div>
          </div>
          <div className={`${ROLLOUT} h-9`}>
            <RolloutTitle label="软选择" closed />
          </div>
        </div>
        <div className="mt-px h-[257px] w-1 bg-[#5c5c5c]" />
      </div>
    </div>
  );
}

function Coord({ axis, value }) {
  return (
    <>
      <span className="w-[13px] shrink-0">{axis}:</span>
      <div className="mr-[3px] flex h-[17px] w-[68px] shrink-0 items-center justify-between bg-[#5e5e5e] pr-0.5 pl-[3px] text-[10.5px] text-[#c8c8c8]">
        <span className="w-[55px] overflow-hidden whitespace-nowrap">{value}</span>
        <Spinner className="h-2" />
      </div>
    </>
  );
}

function StatusBar() {
  return (
    <div className="flex h-[50px] shrink-0 bg-[#444] text-[11px] text-[#e4e4e4]">
      <div className="flex w-[105px] flex-col gap-0.5 border-r border-black pt-0.5">
        <div className="h-[22px] w-[99px] border-2 border-[#f0f0f0] border-t-[#777] border-l-[#777] bg-[#dcc4c6]" />
        <div className="h-[23px] w-[99px] overflow-hidden border-2 border-[#f0f0f0] border-t-[#777] border-l-[#777] bg-white pl-[3px] font-['Liberation_Mono','Noto_Sans_CJK_SC',monospace] text-[11px] leading-[18px] tracking-[-0.1px] whitespace-pre text-black">
          欢迎使用 MAXScr
        </div>
      </div>
      <div className="flex flex-1 flex-col pl-1">
        <div className="flex h-[30px] items-center">
          <span className="w-[920px] shrink-0">选择了 1 个 对象</span>
          <Svg className="mr-3 h-3.5 w-3.5">
            <path d="M2 7V2H7M17 2H22V7M22 17V22H17M7 22H2V17" stroke={L} strokeWidth="2" />
            <path d="M8 7H17V17H8Z" fill={T} />
          </Svg>
          <Svg className="mr-[11px] h-4 w-4">
            <path d="M5 11H19V23H5Z" fill={L} />
            <path d="M8 11V6Q8 2 12 2Q16 2 16 6V11" stroke={L} strokeWidth="2.500" />
          </Svg>
          <Svg className="mr-2 h-4 w-4">
            <path d="M2 2H22V22H2Z" stroke={L} strokeWidth="2" />
            <circle cx="12" cy="12" r="5" stroke={L} strokeWidth="2.500" />
            <path d="M12 2V8M12 16V22M2 12H8M16 12H22" stroke={L} strokeWidth="1.500" />
          </Svg>
          <Coord axis="X" value="1618.29mm" />
          <Coord axis="Y" value="-276.69mm" />
          <Coord axis="Z" value="1721.433m" />
          <span className="ml-0.5">栅格 =</span>
        </div>
        <div className="flex h-5 items-center">
          <span className="w-[1224px] shrink-0 leading-3">单击或单击并拖动以选择对象</span>
          <div className="mr-[5px] flex h-[19px] w-[22px] items-center justify-center rounded-[3px] bg-[#5b88c6]">
            <Svg className="h-4 w-4"><path d="M12 2L21 7V17L12 22L3 17V7ZM3 7L12 12L21 7M12 12V22" stroke="#e4e4e4" strokeWidth="1.600" /></Svg>
          </div>
          <span>添加时间标记</span>
        </div>
      </div>
    </div>
  );
}

function Task({ children, open, active }) {
  return (
    <div className={`relative flex h-10 w-[49px] items-center justify-center ${active ? "bg-[#636553]" : ""}`}>
      <Svg className="h-6 w-6">{children}</Svg>
      {open && <div className={`absolute bottom-0 h-0.5 bg-[#76b9ed] ${active ? "w-[49px]" : "w-10"}`} />}
    </div>
  );
}

function Taskbar() {
  return (
    <div className="flex h-10 shrink-0 bg-linear-to-r from-[#1f2826] via-[#31331f] to-[#37351f]">
      <div className="flex w-12 items-center justify-center">
        <Svg className="h-4 w-4">
          <path d="M0 3.500L10 2V11.500H0ZM11 1.800L24 0V11.500H11ZM0 12.500H10V22L0 20.500ZM11 12.500H24V24L11 22.200Z" fill="#fff" />
        </Svg>
      </div>
      <div className="flex w-[343px] items-center bg-[#f2f2f2] pl-3 text-[13px] text-[#333]">
        <Svg className="mr-3 h-4 w-4">
          <circle cx="15" cy="9" r="7.500" stroke="#222" strokeWidth="1.700" />
          <path d="M10 14L1 23" stroke="#222" strokeWidth="1.700" />
        </Svg>
        <span className="pt-0.5">在这里输入你要搜索的内容</span>
      </div>
      <Task><circle cx="12" cy="12" r="7" stroke="#eee" strokeWidth="2" /></Task>
      <Task>
        <path d="M5 7V4M5 5H15V7M5 8H15V16H5ZM5 17V20M5 19H15V17M19 4V6M19 10V20" stroke="#eee" strokeWidth="1.400" />
        <path d="M18 7H20V9H18Z" fill="#eee" />
      </Task>
      <Task>
        <circle cx="12" cy="12" r="11.500" fill="#1477c8" />
        <path d="M1 10Q3 1 12 .5Q23 1 23.500 11Q23 16 17 16Q12 15 15 11Q14 7 8 7Q3 7 1 10Z" fill="#43c8a0" />
        <path d="M1 10Q3 1 12 .5Q19 1 18 9Q13 4 7 6Q3 7 1 10Z" fill="#2fb4dc" />
        <path d="M10 9Q6 17 14 20Q18 22 21 18Q17 20 14 17Q10 14 12 10Z" fill="#31331f" />
        <path d="M9 9Q4 17 14 23Q6 24 2 17Q1 9 9 9Z" fill="#0d539c" />
      </Task>
      <Task open>
        <path d="M1 4H9L11 6H23V21H1Z" fill="#e9a820" />
        <path d="M1 8H23V21H1Z" fill="#fcd462" />
        <path d="M5 21V13H19V21H15V17H9V21Z" fill="#3d8fd8" />
      </Task>
      <Task>
        <ellipse cx="10" cy="13" rx="10" ry="7" fill="#8d6a66" transform="rotate(-30 10 13)" />
        <ellipse cx="12" cy="9" rx="10" ry="7" fill="#f4eeee" stroke="#b0423c" transform="rotate(-30 12 9)" />
        <path d="M12 5L15 17M18 7L13 17" stroke="#7b8b98" strokeWidth="1.500" />
        <circle cx="19" cy="17" r="2.500" stroke="#2f7dc0" strokeWidth="2" />
        <circle cx="14" cy="20" r="2.500" stroke="#2f7dc0" strokeWidth="2" />
      </Task>
      <Task open>
        <path d="M1 14Q1 5 12 4Q23 5 22 15Q20 23 11 22Q9 20 9 17Q6 20 3 18Q1 17 1 14Z" fill="#bfe0f4" />
        <circle cx="6" cy="12" r="2" fill="#d84c3c" />
        <circle cx="11" cy="8" r="2" fill="#4caf50" />
        <circle cx="11" cy="17" r="2" fill="#2b6fc0" />
        <path d="M20 4L15 22" stroke="#d89030" strokeWidth="2.500" />
        <path d="M18 6L20 0L23 2L21 7Z" fill="#b8843c" />
      </Task>
      <Task>
        <path d="M2 4L5 7Q8 4 10 6Q13 4 14 1Q22 6 23 13Q22 23 12 23Q1 22 1 12Z" fill="#ff7a1a" />
        <path d="M14 1Q22 6 23 13Q22 20 16 22Q22 12 14 7Z" fill="#ffcf30" />
        <path d="M1 12Q1 22 12 23Q17 23 20 19Q10 22 7 15Z" fill="#f5325c" />
        <circle cx="12" cy="13" r="5" fill="#7a3cc8" />
      </Task>
      <Task open>
        <path d="M1 1H23V23H1Z" fill="#f4f6fa" stroke="#3a6ac0" strokeWidth="2" />
        <path d="M4 14Q12 12 14 4" stroke="#2f6fd0" strokeWidth="2.500" />
        <path d="M6 20Q17 18 20 7" stroke="#f09a28" strokeWidth="3" />
      </Task>
      <Task open>
        <rect x="1" y="0" width="21" height="24" rx="4" fill="#fff" />
        <path d="M8 3Q15 2 17 7Q16 11 12 9Q7 8 8 3Z" fill="#f02878" />
        <path d="M16 9Q14 16 8 16Q7 12 12 11Z" fill="#18b8d8" />
        <text x="3" y="22" fontSize="6" fontWeight="bold" fill="#f02878">YOU</text>
        <rect x="12" y="13" width="12" height="11" rx="2" fill="#3ba0dc" stroke="#fff" />
        <path d="M16 16V21M20 16V21" stroke="#fff" strokeWidth="2" />
      </Task>
      <Task open active>
        <path d="M0 0H24V24H0Z" fill="#d5ece8" />
        <path d="M6 4Q12 1 17 5Q18 9 14 11Q19 14 16 18Q11 21 6 18V15Q12 17 12 14Q12 12 8 12V9Q12 9 12 7Q11 5 6 7Z" fill="#118f8a" />
        <text x="13" y="23" fontSize="5" fontWeight="bold" fill="#118f8a">MAX</text>
      </Task>
    </div>
  );
}

function SiteLogo() {
  return (
    <div className="absolute top-[818px] left-[1392px] h-[264px] w-[528px] bg-[#fefefe]">
      <svg className="h-full w-full" viewBox="1392 818 528 264" fill="none">
        <defs>
          <linearGradient id="tower" x1="0" y1="0" x2="1" y2="0">
            <stop offset="0" stopColor="#12398c" />
            <stop offset=".55" stopColor="#5585bd" />
            <stop offset="1" stopColor="#12398c" />
          </linearGradient>
        </defs>
        <g transform="translate(1380 810) scale(.34436 .33333)">
          <path d="M375 302L448 342V375L410 395V500L375 520ZM486 385L536 410L486 450Z" fill="#dedfe1" />
          <path d="M200 392Q285 258 430 248C530 245 600 300 574 365L556 392C570 320 530 278 440 278Q300 270 200 392Z" fill="#94c424" />
          <path d="M192 424C160 480 172 540 220 565C280 600 360 585 430 550C520 500 570 440 580 385Q540 470 440 515Q330 560 250 530Q180 490 192 424Z" fill="#143a8e" />
          <path d="M203 450L264 415V512Q225 490 203 450Z" fill="#143f97" />
          <path d="M293 335L369 296V519H293Z" fill="url(#tower)" />
          <path d="M410 404L470 374V474Q440 494 410 504Z" fill="#143f97" />
        </g>
        <text transform="translate(1579 958) skewX(-7)" fontSize="54" fontWeight="900" fill="#000" stroke="#000" strokeWidth="1.600" textLength="290" lengthAdjust="spacingAndGlyphs">
          土木工程网
        </text>
        <text x="1582" y="994" fontSize="35" fontStyle="italic" fontWeight="500" fill="#111" stroke="#111" strokeWidth=".4" textLength="282" lengthAdjust="spacingAndGlyphs">
          www.civilcn.com
        </text>
      </svg>
    </div>
  );
}

export default function App() {
  return (
    <div className="relative h-[1082px] w-[1920px] overflow-hidden bg-white font-['Noto_Sans','Noto_Sans_CJK_SC',sans-serif]">
      <div className="flex h-[1080px] flex-col">
        <TitleBar />
        <MenuBar />
        <Toolbar />
        <Ribbon />
        <div className="flex h-[864px] shrink-0 border-t border-[#222]">
          <div className="flex w-10 shrink-0 flex-col justify-end border-r border-[#222] bg-linear-to-r from-[#353535] to-[#2b2b2b] pb-0.5">
            <div className="mx-auto mb-[13px] flex h-[18px] w-[19px] items-center justify-center rounded-[3px] bg-[#505050]">
              <Svg className="h-2 w-[5px]" box="0 0 5 8"><path d="M0 0L5 4L0 8Z" fill="#eee" /></Svg>
            </div>
            <div className="ml-1 flex h-[43px] items-center justify-center rounded-l-[4px] border border-[#4a76ae] bg-linear-to-b from-[#49627f] to-[#3c78cc]">
              <div className="grid h-7 w-[30px] grid-cols-2 gap-0.5 border border-[#28384c] bg-[#28384c]">
                <div className="bg-[#647486]" />
                <div className="bg-[#647486]" />
                <div className="bg-[#647486]" />
                <div className="bg-[#647486]" />
              </div>
            </div>
          </div>
          <Explorer />
          <Workspace />
          <CommandPanel />
        </div>
        <StatusBar />
        <Taskbar />
      </div>
      <AppButton />
      <SiteLogo />
    </div>
  );
}
